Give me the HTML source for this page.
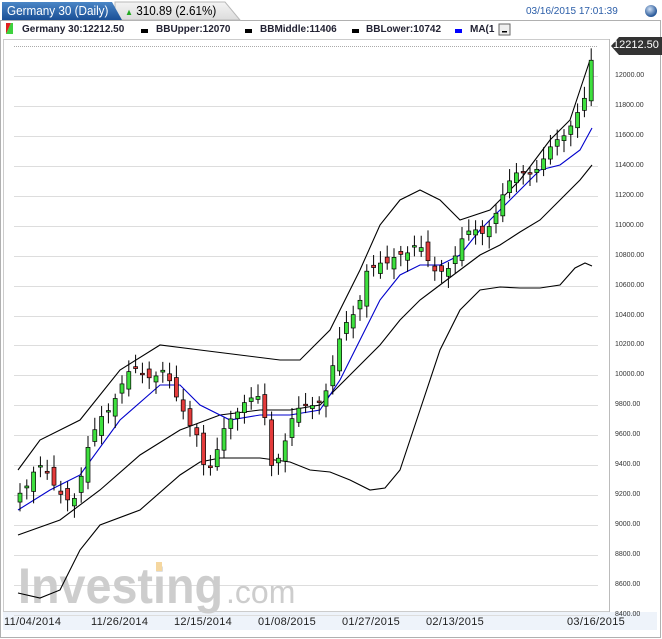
<!DOCTYPE html><html><head><style>
body{margin:0;width:662px;height:639px;background:#fff;font-family:"Liberation Sans",sans-serif;overflow:hidden;position:relative}
.t{position:absolute;white-space:nowrap}
</style></head><body>
<svg width="662" height="639" style="position:absolute;left:0;top:0" id="s">
<defs><linearGradient id="g" x1="0" y1="0" x2="0" y2="1"><stop offset="0" stop-color="#4a86c6"/><stop offset="1" stop-color="#1a4f96"/></linearGradient>
<linearGradient id="g2" x1="0" y1="0" x2="0" y2="1"><stop offset="0" stop-color="#f4f4f4"/><stop offset="1" stop-color="#dcdcdc"/></linearGradient>
<radialGradient id="b" cx="0.4" cy="0.35" r="0.6"><stop offset="0" stop-color="#cfe0f5"/><stop offset="1" stop-color="#2a5a9a"/></radialGradient></defs>
<rect x="0.5" y="20.5" width="660" height="617" fill="#fff" stroke="#b0b0b0"/>
<path d="M115 2 H225 L240 20 H115Z" fill="url(#g2)" stroke="#b8b8b8"/>
<path d="M2 20 V2 H112 L122 20Z" fill="url(#g)"/>
<rect x="1" y="21" width="659" height="18" fill="#fff"/>
<path d="M6 23 V34 L11 23Z" fill="#e02020"/><path d="M6 34 L11 23 H13 V34Z" fill="#3dd23d"/>
<rect x="141" y="29" width="7" height="4" fill="#000"/><rect x="245" y="29" width="7" height="4" fill="#000"/><rect x="352" y="29" width="7" height="4" fill="#000"/><rect x="455" y="29" width="7" height="4" fill="#00f"/>
<rect x="499" y="24" width="11" height="11" fill="#eee" stroke="#666"/><rect x="502" y="31" width="5" height="1.5" fill="#000"/>
<circle cx="651" cy="11" r="6" fill="url(#b)"/>
<rect x="3.5" y="39.5" width="606" height="572" fill="#fff" stroke="#ccc"/>
<line x1="609.5" y1="39" x2="609.5" y2="612" stroke="#bbb"/>
<rect x="3" y="612" width="654" height="18" fill="#eef3fa"/>
<line x1="14" y1="46.5" x2="598" y2="46.5" stroke="#aaa" stroke-dasharray="1,1"/>
<g id="grid"></g>
<text x="18" y="603" font-family="Liberation Sans" font-weight="bold" font-size="50" fill="#cdcdcd" textLength="205" lengthAdjust="spacingAndGlyphs">Investing</text>
<text x="226" y="603" font-family="Liberation Sans" font-size="32" fill="#cdcdcd">.com</text>
<rect x="156" y="562" width="6" height="9" fill="#f5d7a0"/>
<g id="c"></g>
<path d="M611 46 L619 37 H662 V55 H619Z" fill="#333"/>
</svg>
<div class="t" style="left:7px;top:3px;color:#fff;font-size:13px;transform:scaleX(0.9);transform-origin:0 0">Germany 30 (Daily)</div>
<div class="t" style="left:125px;top:3px;font-size:13px;color:#000;transform:scaleX(0.9);transform-origin:0 0"><span style="color:#2a2;font-size:9px">▲</span> 310.89 (2.61%)</div>
<div class="t" style="left:526px;top:6px;font-size:10px;color:#2a5da8">03/16/2015 17:01:39</div>
<div class="t" style="left:22px;top:24px;font-size:10px;font-weight:bold;color:#223">Germany 30:12212.50</div>
<div class="t" style="left:156px;top:24px;font-size:10px;font-weight:bold;color:#223">BBUpper:12070</div>
<div class="t" style="left:260px;top:24px;font-size:10px;font-weight:bold;color:#223">BBMiddle:11406</div>
<div class="t" style="left:366px;top:24px;font-size:10px;font-weight:bold;color:#223">BBLower:10742</div>
<div class="t" style="left:470px;top:24px;font-size:10px;font-weight:bold;color:#223">MA(1</div>
<div class="t" style="left:613px;top:39px;font-size:11px;color:#fff">12212.50</div>
<div id="lab"></div>
<div class="t" style="left:4px;top:616px;font-size:11px;color:#222;letter-spacing:0.3px">11/04/2014</div>
<div class="t" style="left:91px;top:616px;font-size:11px;color:#222;letter-spacing:0.3px">11/26/2014</div>
<div class="t" style="left:174px;top:616px;font-size:11px;color:#222;letter-spacing:0.3px">12/15/2014</div>
<div class="t" style="left:258px;top:616px;font-size:11px;color:#222;letter-spacing:0.3px">01/08/2015</div>
<div class="t" style="left:342px;top:616px;font-size:11px;color:#222;letter-spacing:0.3px">01/27/2015</div>
<div class="t" style="left:426px;top:616px;font-size:11px;color:#222;letter-spacing:0.3px">02/13/2015</div>
<div class="t" style="left:567px;top:616px;font-size:11px;color:#222;letter-spacing:0.3px">03/16/2015</div>
<script>
var NS="http://www.w3.org/2000/svg";function Y(v){return 76+(12000-v)*0.14972;}
var g=document.getElementById('grid'),lab=document.getElementById('lab'),h='';
for(var v=8400;v<=12000;v+=200){var y=Y(v);var l=document.createElementNS(NS,'line');l.setAttribute('x1',14);l.setAttribute('x2',598);l.setAttribute('y1',Math.round(y)+.5);l.setAttribute('y2',Math.round(y)+.5);l.setAttribute('stroke','#ddd');g.appendChild(l);
h+='<div class="t" style="left:615px;top:'+(y-4)+'px;font-size:7px;color:#333">'+v+'.00</div>';}
lab.innerHTML=h;
var c=document.getElementById('c');
function pl(pts,col){var p=document.createElementNS(NS,'polyline');p.setAttribute('points',pts.map(function(a){return a.join(',')}).join(' '));p.setAttribute('fill','none');p.setAttribute('stroke',col);p.setAttribute('stroke-width',1.1);c.appendChild(p);}
pl([[18,470],[40,440],[80,420],[120,370],[160,345],[200,350],[240,355],[280,360],[300,360],[330,330],[360,270],[380,225],[400,200],[420,190],[440,200],[460,220],[490,210],[520,180],[550,140],[570,120],[590,60]],'#000');
pl([[18,535],[60,520],[100,490],[140,455],[180,430],[220,415],[260,410],[290,410],[320,405],[350,375],[380,345],[400,320],[420,300],[440,285],[460,270],[480,255],[500,245],[520,232],[540,220],[560,200],[580,180],[592,165]],'#000');
pl([[18,593],[40,598],[60,590],[80,550],[100,525],[140,510],[180,475],[200,462],[220,458],[260,458],[290,462],[310,470],[330,472],[350,480],[370,490],[385,488],[400,470],[420,410],[440,350],[460,310],[480,290],[500,287],[520,288],[540,288],[560,285],[575,268],[585,263],[592,266]],'#000');
pl([[18,510],[50,490],[80,475],[120,420],[160,385],[180,385],[200,405],[230,420],[260,415],[290,415],[320,410],[340,380],[360,340],[380,300],[400,275],[420,265],[440,265],[460,255],[480,230],[500,210],[520,190],[540,170],[560,165],[580,150],[592,128]],'#00c');
var K=[[18,9250],[35,9400],[50,9250],[75,9200],[85,9450],[100,9750],[115,9900],[130,10000],[160,10050],[175,9800],[195,9650],[205,9300],[215,9450],[225,9700],[240,9850],[260,9800],[270,9400],[290,9700],[310,9800],[325,9950],[340,10250],[355,10450],[365,10750],[385,10700],[400,10850],[415,10900],[430,10650],[445,10750],[460,10900],[480,10950],[500,11200],[520,11350],[540,11450],[560,11550],[575,11800],[585,11900],[592,12200]];
function P(x){for(var i=1;i<K.length;i++)if(x<=K[i][0]){var a=K[i-1],b=K[i];return a[1]+(b[1]-a[1])*(x-a[0])/(b[0]-a[0]);}return 12200;}
var prev=P(11);
for(var x=18;x<=592;x+=6.8){var cl=P(x)+Math.sin(x*1.7)*50;if(x>590)cl=12212;var op=(x>590)?11900:prev+Math.cos(x*2.3)*40;
var up=cl>=op,t=Y(Math.max(op,cl)),bo=Y(Math.min(op,cl));if(bo-t<1.5)bo=t+1.5;
var w=document.createElementNS(NS,'line');w.setAttribute('x1',x+2);w.setAttribute('x2',x+2);w.setAttribute('y1',t-4-Math.abs(Math.sin(x))*8);w.setAttribute('y2',bo+4+Math.abs(Math.cos(x))*8);w.setAttribute('stroke','#000');c.appendChild(w);
var r=document.createElementNS(NS,'rect');r.setAttribute('x',x);r.setAttribute('y',t);r.setAttribute('width',4);r.setAttribute('height',bo-t);r.setAttribute('fill',up?'#3ee03e':'#e43b3b');r.setAttribute('stroke','#000');r.setAttribute('stroke-width',.7);c.appendChild(r);prev=cl;}
</script>
</body></html>
